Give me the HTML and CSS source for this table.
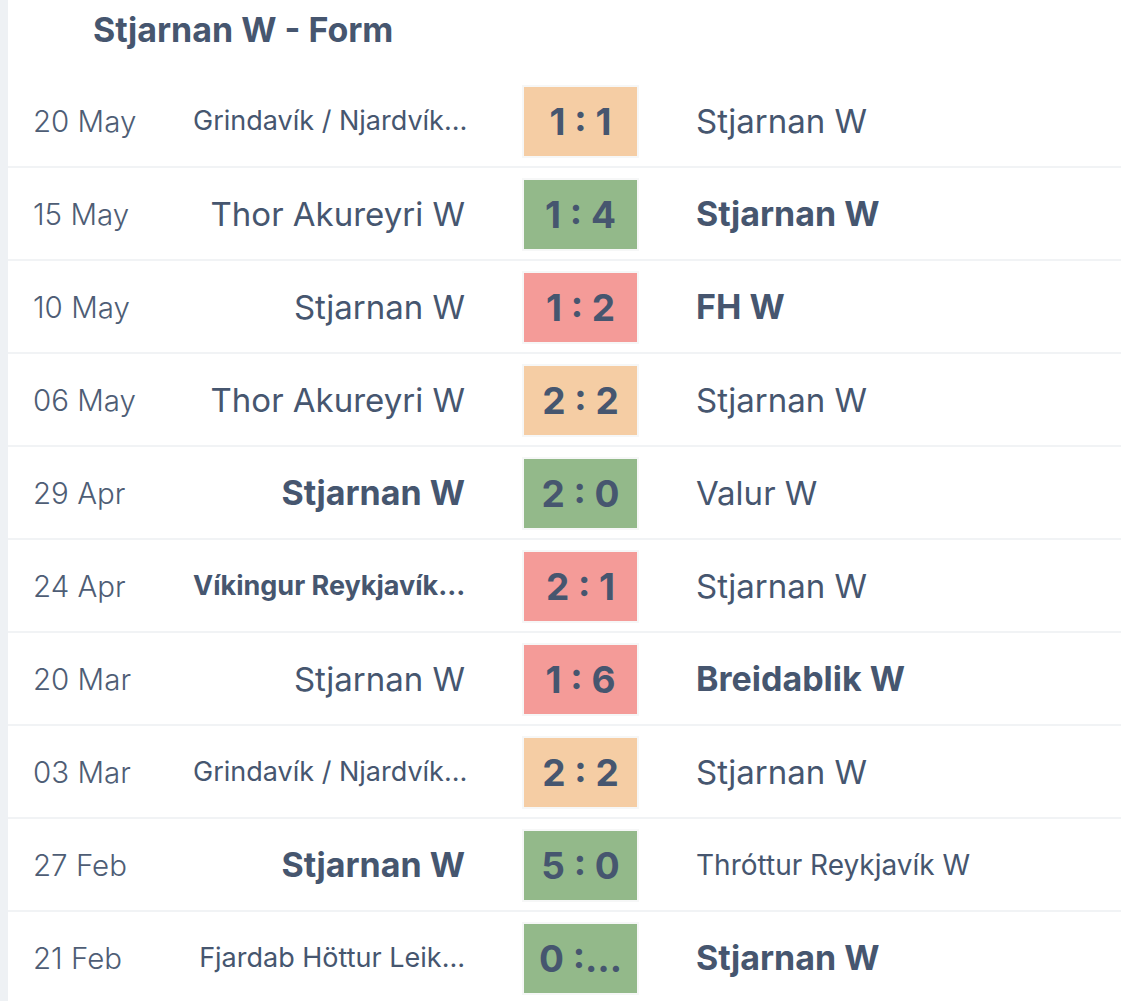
FILE: index.html
```html
<!DOCTYPE html>
<html>
<head>
<meta charset="utf-8">
<link rel="stylesheet" href="styles.css">
</head>
<body>
<div class="panel">
  <h1 class="title">Stjarnan W - Form</h1>
  <div class="list">
    <div class="row">
      <div class="date">20 May</div>
      <div class="home small">Grindavík / Njardvík…</div>
      <div class="score draw">1 : 1</div>
      <div class="away">Stjarnan W</div>
    </div>
    <div class="row">
      <div class="date">15 May</div>
      <div class="home">Thor Akureyri W</div>
      <div class="score win">1 : 4</div>
      <div class="away bold">Stjarnan W</div>
    </div>
    <div class="row">
      <div class="date">10 May</div>
      <div class="home">Stjarnan W</div>
      <div class="score loss">1 : 2</div>
      <div class="away bold">FH W</div>
    </div>
    <div class="row">
      <div class="date">06 May</div>
      <div class="home">Thor Akureyri W</div>
      <div class="score draw">2 : 2</div>
      <div class="away">Stjarnan W</div>
    </div>
    <div class="row">
      <div class="date">29 Apr</div>
      <div class="home bold">Stjarnan W</div>
      <div class="score win">2 : 0</div>
      <div class="away">Valur W</div>
    </div>
    <div class="row">
      <div class="date">24 Apr</div>
      <div class="home small bold">Víkingur Reykjavík…</div>
      <div class="score loss">2 : 1</div>
      <div class="away">Stjarnan W</div>
    </div>
    <div class="row">
      <div class="date">20 Mar</div>
      <div class="home">Stjarnan W</div>
      <div class="score loss">1 : 6</div>
      <div class="away bold">Breidablik W</div>
    </div>
    <div class="row">
      <div class="date">03 Mar</div>
      <div class="home small">Grindavík / Njardvík…</div>
      <div class="score draw">2 : 2</div>
      <div class="away">Stjarnan W</div>
    </div>
    <div class="row">
      <div class="date">27 Feb</div>
      <div class="home bold">Stjarnan W</div>
      <div class="score win">5 : 0</div>
      <div class="away medium">Thróttur Reykjavík W</div>
    </div>
    <div class="row">
      <div class="date">21 Feb</div>
      <div class="home small">Fjardab Höttur Leik…</div>
      <div class="score win">0 :…</div>
      <div class="away bold">Stjarnan W</div>
    </div>
  </div>
</div>
</body>
</html>
```
FILE: styles.css
```css
html, body {
  margin: 0;
  padding: 0;
}
body {
  background: #eef1f4;
  font-family: Inter, "Noto Sans", sans-serif;
  color: #46566f;
}
.panel {
  margin-left: 8px;
  background: #ffffff;
  min-height: 1001px;
}
.title {
  margin: 0;
  height: 75px;
  box-sizing: border-box;
  padding: 10px 0 0 85px;
  font-size: 34px;
  font-weight: 700;
  line-height: 40px;
  color: #46566f;
}
.row {
  display: flex;
  align-items: center;
  height: 91px;
  border-bottom: 2px solid #f1f3f5;
  padding-left: 25px;
}
.date {
  width: 160px;
  flex: none;
  font-size: 29.5px;
  font-weight: 300;
  color: #4e5d75;
}
.home {
  width: 272px;
  flex: none;
  text-align: right;
  font-size: 33px;
  white-space: nowrap;
}
.away {
  flex: 1;
  font-size: 33px;
  white-space: nowrap;
}
.bold {
  font-weight: 700;
  font-size: 34px;
}
.small {
  font-size: 27px;
}
.medium {
  font-size: 28px;
}
.score {
  flex: none;
  width: 113px;
  height: 69px;
  margin: 2px 59px 0 59px;
  box-shadow: 0 0 0 2px #f6f7f7;
  display: flex;
  align-items: center;
  justify-content: center;
  font-size: 37px;
  font-weight: 700;
  color: #46566f;
}
.draw { background: #f5cda4; }
.win { background: #93b98a; }
.loss { background: #f49b98; }
```
